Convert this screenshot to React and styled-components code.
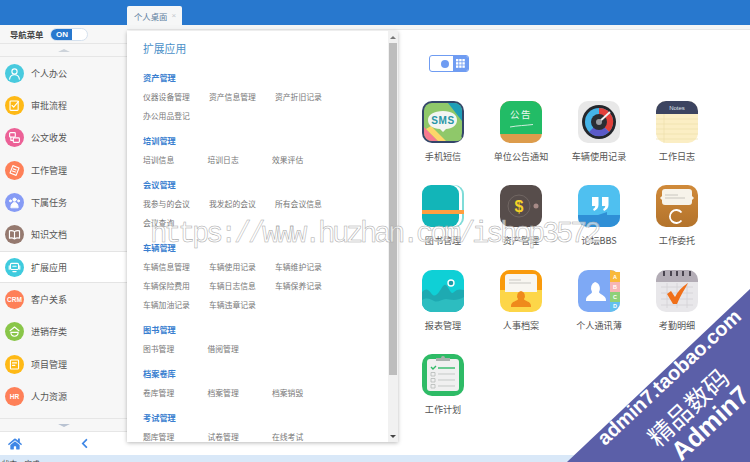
import styled, { createGlobalStyle } from 'styled-components';
import { FaHome, FaChevronLeft } from 'react-icons/fa';

const GlobalStyle = createGlobalStyle`
  html, body { margin: 0; padding: 0; background: #fff; }
  body { font-family: "Noto Sans CJK SC", "Liberation Sans", sans-serif; }
`;

const Shell = styled.div`
  position: relative;
  width: 750px;
  height: 462px;
  overflow: hidden;
  display: flex;
  flex-direction: column;
`;

const TopBar = styled.div`
  height: 25px;
  flex: none;
  background: #2878ce;
  display: flex;
  align-items: flex-end;
  padding-left: 127px;
`;

const Tab = styled.div`
  width: 55px;
  height: 19px;
  background: #f6f7f7;
  border-radius: 2px 2px 0 0;
  display: flex;
  align-items: center;
  padding-left: 7px;
  box-sizing: border-box;
  gap: 4px;
  font-size: 8.4px;
  color: #5f7f9f;
`;

const TabClose = styled.span`
  color: #c4c8cc;
  font-size: 8px;
  font-family: "Liberation Sans", sans-serif;
`;

const Middle = styled.div`
  flex: 1;
  display: flex;
  min-height: 0;
`;

const Sidebar = styled.aside`
  width: 127px;
  flex: none;
  background: #f7f7f7;
  display: flex;
  flex-direction: column;
`;

const NavHead = styled.div`
  height: 19px;
  flex: none;
  display: flex;
  align-items: center;
  padding-left: 10px;
  gap: 6px;
  border-bottom: 1px solid #e6e6e6;
  box-sizing: border-box;
  font-size: 8.4px;
  font-weight: 700;
  color: #444;
`;

const Switch = styled.div`
  width: 38px;
  height: 13px;
  border-radius: 7px;
  border: 1px solid #d5e1ee;
  background: #fff;
  box-sizing: border-box;
  overflow: hidden;
`;

const SwitchOn = styled.div`
  width: 21px;
  height: 100%;
  background: #2878ce;
  color: #fff;
  font: 700 8px/11px "Liberation Sans", sans-serif;
  text-align: center;
  padding-left: 2px;
  box-sizing: border-box;
`;

const ScrollRow = styled.div`
  height: 13px;
  flex: none;
  display: flex;
  align-items: center;
  justify-content: center;
  box-sizing: border-box;
  border-bottom: ${p => (p.$line ? '1px solid #e6e6e6' : 'none')};
  border-top: ${p => (p.$down ? '1px solid #e6e6e6' : 'none')};
`;

const Caret = styled.span`
  width: 0;
  height: 0;
  border-left: 6px solid transparent;
  border-right: 6px solid transparent;
  border-bottom: ${p => (p.$down ? 'none' : '3px solid #cdd3da')};
  border-top: ${p => (p.$down ? '3px solid #b9c3d2' : 'none')};
`;

const NavList = styled.nav`
  height: 361px;
  flex: none;
  display: flex;
  flex-direction: column;
`;

const NavItem = styled.div`
  height: 32.35px;
  flex: none;
  display: flex;
  align-items: center;
  padding-left: 5px;
  gap: 7px;
  box-sizing: border-box;
  font-size: 9px;
  color: #555;
  background: ${p => (p.$active ? '#fff' : 'transparent')};
  border-top: ${p => (p.$active ? '1px solid #e4e4e4' : 'none')};
  border-bottom: ${p => (p.$active ? '1px solid #e4e4e4' : 'none')};
`;

const Badge = styled.span`
  width: 19px;
  height: 19px;
  border-radius: 50%;
  background: ${p => p.$color};
  display: flex;
  align-items: center;
  justify-content: center;
  flex: none;
  color: #fff;
  opacity: 0.95;
  font: 700 6.5px "Liberation Sans", sans-serif;
`;

const NavFoot = styled.div`
  flex: 1;
  display: flex;
  align-items: center;
  border-top: 1px solid #e6e6e6;
  background: #fff;
  color: #3f87e6;
  padding-left: 8px;
  gap: 57px;
  font-size: 14px;
`;

const FootBack = styled.span`
  display: flex;
  font-size: 11px;
`;

const Main = styled.main`
  flex: 1;
  position: relative;
  display: flex;
  flex-direction: column;
  background: #fff;
`;

const Strip = styled.div`
  height: 5px;
  flex: none;
  background: #f4f5f5;
  border-bottom: 1px solid #e8e8e8;
  box-sizing: border-box;
`;

const ViewSwitch = styled.div`
  margin: 25px 0 0 302px;
  width: 40px;
  height: 17px;
  display: flex;
  border: 1px solid #6f9cf2;
  border-radius: 3px;
  box-sizing: border-box;
  overflow: hidden;
`;

const ViewList = styled.div`
  flex: 1;
  display: flex;
  align-items: center;
  justify-content: flex-end;
  padding-right: 4px;
  &::after {
    content: '';
    width: 8px;
    height: 8px;
    border-radius: 50%;
    background: #6f9cf2;
  }
`;

const ViewGrid = styled.div`
  width: 15px;
  background: #6f9cf2;
  display: flex;
  align-items: center;
  justify-content: center;
`;

const AppGrid = styled.div`
  margin: 29px 0 0 277px;
  display: grid;
  grid-template-columns: repeat(4, 78px);
  grid-auto-rows: 84.35px;
`;

const AppCell = styled.div`
  display: flex;
  flex-direction: column;
  align-items: center;
  gap: 7px;
  font-size: 9.1px;
  line-height: 12px;
  color: #555;
  white-space: nowrap;
`;

const Flyout = styled.section`
  position: absolute;
  left: 0;
  top: 6px;
  width: 271px;
  height: 411px;
  background: #fff;
  box-shadow: 0 1px 4px rgba(0, 0, 0, 0.28);
  display: flex;
`;

const FlyoutBody = styled.div`
  flex: 1;
  overflow: hidden;
  padding: 10px 0 0 16px;
`;

const FlyoutTitle = styled.div`
  font-size: 10.8px;
  line-height: 14px;
  color: #4a90c8;
  margin-bottom: 13px;
`;

const Group = styled.div`
  margin-bottom: 6px;
`;

const GroupName = styled.div`
  height: 19px;
  line-height: 19px;
  font-size: 8.2px;
  font-weight: 700;
  color: #3a7fd0;
`;

const LinkRow = styled.div`
  display: grid;
  grid-template-columns: repeat(3, ${p => p.$pitch}px);
  grid-auto-rows: 19px;
  font-size: 7.8px;
  line-height: 19px;
  color: #777;
  white-space: nowrap;
`;

const ScrollBar = styled.div`
  width: 10px;
  flex: none;
  background: #f1f1f1;
  display: flex;
  flex-direction: column;
`;

const ScrollBtn = styled.div`
  height: 12px;
  flex: none;
  display: flex;
  align-items: center;
  justify-content: center;
  &::after {
    content: '';
    border-left: 3px solid transparent;
    border-right: 3px solid transparent;
    border-bottom: ${p => (p.$down ? 'none' : '3px solid #777')};
    border-top: ${p => (p.$down ? '3px solid #444' : 'none')};
  }
`;

const ScrollThumb = styled.div`
  height: 332px;
  margin: 0 1px;
  background: #bdbdbd;
  flex: none;
`;

const ScrollSpace = styled.div`
  flex: 1;
`;

const StatusBar = styled.footer`
  height: 7px;
  flex: none;
  background: #d9e8f8;
  overflow: hidden;
  padding: 4px 0 0 2px;
  box-sizing: border-box;
  font-size: 7.5px;
  line-height: 10px;
  color: #444;
`;

const Watermark = styled.div`
  position: absolute;
  left: 150px;
  top: 218px;
  font: 29px/34px "Liberation Mono", monospace;
  letter-spacing: -3.4px;
  color: rgba(255, 255, 255, 0.6);
  -webkit-text-stroke: 0.5px #a8a8a8;
  white-space: nowrap;
  pointer-events: none;
`;

const Ribbon = styled.div`
  position: absolute;
  right: 0;
  bottom: 0;
  width: 183px;
  height: 173px;
  background: #5b5fa8;
  clip-path: polygon(100% 0, 100% 100%, 0 100%);
`;

const RibbonText = styled.span`
  position: absolute;
  left: ${p => p.$x}px;
  top: ${p => p.$y}px;
  transform: translate(-50%, -50%) rotate(-43deg);
  color: #fff;
  white-space: nowrap;
  font-family: "Liberation Sans", "Noto Sans CJK SC", sans-serif;
  font-size: ${p => p.$size}px;
  font-weight: ${p => p.$weight};
  line-height: 1;
`;

const Stroke = ({ children, w = 1.4 }) => (
  <svg width="13" height="13" viewBox="0 0 16 16" fill="none" stroke="#fff" strokeWidth={w} strokeLinecap="round" strokeLinejoin="round">
    {children}
  </svg>
);

const navItems = [
  { name: '个人办公', color: '#3fc8dd', icon: <Stroke><circle cx="8" cy="5.5" r="3.2" /><path d="M2 15c.4-3.6 2.6-5.4 6-5.4s5.600 1.800 6 5.400" /></Stroke> },
  { name: '审批流程', color: '#ffb60a', icon: <Stroke><rect x="2.500" y="2.500" width="10" height="11.500" rx="1" /><path d="M5 8l2 2 6-7" /></Stroke> },
  { name: '公文收发', color: '#ec5a92', icon: <Stroke><rect x="2" y="2" width="7" height="5.500" rx="1" /><rect x="6.500" y="8.500" width="7.500" height="5.500" rx="1" /><path d="M3.500 7.500v4h3" /></Stroke> },
  { name: '工作管理', color: '#ff7a50', icon: <Stroke><path d="M6 2l7.500 3-3.500 9-7.500-3zM6.500 6l3.500 1.400M5.500 8.500l3.500 1.400" /></Stroke> },
  { name: '下属任务', color: '#8097f5', icon: <Stroke w={1.200}><circle cx="8" cy="4.500" r="2" fill="#fff" /><circle cx="3" cy="6" r="1.200" fill="#fff" /><circle cx="13" cy="6" r="1.200" fill="#fff" /><path d="M3.500 14c0-3.500 1.800-6 4.500-6s4.500 2.500 4.500 6z" fill="#fff" /></Stroke> },
  { name: '知识文档', color: '#907368', icon: <Stroke><path d="M8 4.500C6.500 3.300 4 3 1.800 3.500v9c2.200-.5 4.700-.2 6.200 1 1.500-1.200 4-1.500 6.200-1v-9C12 3 9.500 3.300 8 4.500zM8 4.500v9" /></Stroke> },
  { name: '扩展应用', color: '#35c9dd', active: true, icon: <Stroke><rect x="3" y="3" width="10" height="7.500" rx="1.500" /><path d="M6 13h4M1.500 6v4M14.500 6v4M6 6.500h4" /></Stroke> },
  { name: '客户关系', color: '#ff7a50', label: 'CRM' },
  { name: '进销存类', color: '#84c440', icon: <Stroke><path d="M2.500 7L8 2.500 13.500 7M3.500 9h9c0 3-1.500 4.800-4.500 4.800S3.500 12 3.500 9z" /></Stroke> },
  { name: '项目管理', color: '#ffb60a', icon: <Stroke><rect x="3" y="2.500" width="10" height="11" rx="1" /><path d="M5.500 6h5M5.500 9h3" /></Stroke> },
  { name: '人力资源', color: '#ff7a50', label: 'HR' },
];

const groups = [
  { name: '资产管理', pitch: 66, links: ['仪器设备管理', '资产信息管理', '资产折旧记录', '办公用品登记'] },
  { name: '培训管理', pitch: 64.5, links: ['培训信息', '培训日志', '效果评估'] },
  { name: '会议管理', pitch: 66, links: ['我参与的会议', '我发起的会议', '所有会议信息', '会议查询'] },
  { name: '车辆管理', pitch: 66, links: ['车辆信息管理', '车辆使用记录', '车辆维护记录', '车辆保险费用', '车辆日志信息', '车辆保养记录', '车辆加油记录', '车辆违章记录'] },
  { name: '图书管理', pitch: 64.5, links: ['图书管理', '借阅管理'] },
  { name: '档案卷库', pitch: 64.5, links: ['卷库管理', '档案管理', '档案销毁'] },
  { name: '考试管理', pitch: 64.5, links: ['题库管理', '试卷管理', '在线考试'] },
];

const AppSvg = ({ children }) => (
  <svg width="42" height="42" viewBox="0 0 42 42">{children}</svg>
);

const apps = [
  {
    name: '手机短信',
    art: (
      <AppSvg>
        <rect width="42" height="42" rx="10" fill="#34466a" />
        <rect x="2" y="2" width="38" height="38" rx="8" fill="#8fc86a" />
        <path d="M26 2h6a8 8 0 0 1 8 8v10z" fill="#1f9eb8" />
        <path d="M2 26l14 14h-6a8 8 0 0 1-8-8z" fill="#f77a8f" />
        <path d="M9 25l15 15H16L4 28z" fill="#fdd66a" />
        <path d="M30 28l10 8a5 5 0 0 1-5 4H26z" fill="#8fc86a" />
        <path d="M21 10c9 0 14 3.500 14 9s-5 9-11 9l-3 3-3-3c-7 0-12-3.500-12-9s6-9 15-9z" fill="#f3f5f2" />
        <text x="21" y="23" textAnchor="middle" fontFamily="Liberation Sans" fontWeight="700" fontSize="10" letterSpacing=".6" fill="#2a96a6">SMS</text>
      </AppSvg>
    ),
  },
  {
    name: '单位公告通知',
    art: (
      <AppSvg>
        <rect width="42" height="42" rx="10" fill="#dd9c4c" />
        <path d="M0 10a10 10 0 0 1 10-10h22a10 10 0 0 1 10 10v23H0z" fill="#22bc66" />
        <text x="21" y="17" textAnchor="middle" fontFamily="Noto Sans CJK SC" fontSize="9.500" letterSpacing="1.500" fill="#eaf7ef">公告</text>
        <path d="M10 26c8-1.500 15-1.500 23-2.500" stroke="#cfeedd" strokeWidth="1" fill="none" />
      </AppSvg>
    ),
  },
  {
    name: '车辆使用记录',
    art: (
      <AppSvg>
        <rect width="42" height="42" rx="10" fill="#e8e8e8" />
        <circle cx="21" cy="21" r="17" fill="#24272c" />
        <circle cx="21" cy="21" r="14" fill="#45b4e8" />
        <path d="M21 7a14 14 0 0 1 10 24l-10-10z" fill="#e2403a" />
        <path d="M11 31a14 14 0 0 0 20 0l-10-10z" fill="#5b5ac8" />
        <circle cx="21" cy="21" r="8" fill="#2b2e33" />
        <path d="M20 22L32 11" stroke="#f4f4f4" strokeWidth="1.800" />
        <circle cx="21" cy="21" r="3" fill="#9a9da2" />
      </AppSvg>
    ),
  },
  {
    name: '工作日志',
    art: (
      <AppSvg>
        <rect width="42" height="42" rx="10" fill="#fbeec4" />
        <path d="M0 13v-3A10 10 0 0 1 10 0h22a10 10 0 0 1 10 10v3z" fill="#3c4460" />
        <path d="M0 18h42M0 23h42M0 28h42M0 33h42M0 38h42M8 13v29" stroke="#eedfae" strokeWidth="0.700" />
        <text x="21" y="8.500" textAnchor="middle" fontFamily="Liberation Sans" fontSize="6" fill="#dfe2ea">Notes</text>
      </AppSvg>
    ),
  },
  {
    name: '图书管理',
    art: (
      <AppSvg>
        <rect x="4" width="38" height="42" rx="9" fill="#7fdcd8" />
        <rect x="3" width="37" height="42" rx="9" fill="#fff" />
        <rect width="37" height="42" rx="9" fill="#12b5b8" />
        <rect y="25" width="42" height="4" fill="#ff9f40" />
      </AppSvg>
    ),
  },
  {
    name: '资产管理',
    art: (
      <AppSvg>
        <rect width="42" height="42" rx="10" fill="#574d4b" />
        <circle cx="19" cy="21" r="11" fill="none" stroke="#766c68" strokeWidth="0.800" />
        <text x="19" y="27" textAnchor="middle" fontFamily="Liberation Sans" fontWeight="700" fontSize="16" fill="#f5d327">$</text>
        <circle cx="36" cy="21" r="2.500" fill="#a78b87" />
      </AppSvg>
    ),
  },
  {
    name: '论坛BBS',
    art: (
      <AppSvg>
        <rect width="42" height="42" rx="10" fill="#4fc0f0" />
        <path d="M0 30h20l9-3 0 3h13v2a10 10 0 0 1-10 10H10A10 10 0 0 1 0 32z" fill="#2f8fd6" />
        <path d="M14 12h6.500v8c0 3-2 5-4.500 6l-1-2c1.500-.6 2.200-1.600 2.200-3H14zM24 12h6.500v8c0 3-2 5-4.500 6l-1-2c1.500-.6 2.200-1.600 2.200-3H24z" fill="#fff" />
      </AppSvg>
    ),
  },
  {
    name: '工作委托',
    art: (
      <AppSvg>
        <defs>
          <linearGradient id="brownFill" x1="0" y1="0" x2="0" y2="1">
            <stop offset="0" stopColor="#d08a3a" />
            <stop offset="1" stopColor="#b3732b" />
          </linearGradient>
        </defs>
        <rect width="42" height="42" rx="10" fill="url(#brownFill)" />
        <path d="M6 7a3 3 0 0 1 3-3h24a3 3 0 0 1 3 3v4l2 2-2 2v2a3 3 0 0 1-3 3H9a3 3 0 0 1-3-3v-2l-2-2 2-2z" fill="#f7f3ea" />
        <path d="M9 10h13M9 13h20" stroke="#c9c6bf" strokeWidth="1" />
        <path d="M25.500 27.500a6.500 6.500 0 1 0 0 8" fill="none" stroke="#fff" strokeWidth="1.800" />
      </AppSvg>
    ),
  },
  {
    name: '报表管理',
    art: (
      <AppSvg>
        <rect width="42" height="42" rx="10" fill="#0fd0d6" />
        <path d="M0 22c4-4 6-3 9 1s5 3 8-1 5-10 8-6 4 9 7 6 6-3 10-2v12a10 10 0 0 1-10 10H10A10 10 0 0 1 0 32z" fill="#1eaab2" />
        <path d="M0 30c5-3 8-1 12 1s8-2 12-2 9 3 18-2v5a10 10 0 0 1-10 10H10A10 10 0 0 1 0 32z" fill="#2dbdc0" />
        <circle cx="29" cy="13" r="3" fill="#1a9aa4" stroke="#fff" strokeWidth="1.400" />
      </AppSvg>
    ),
  },
  {
    name: '人事档案',
    art: (
      <AppSvg>
        <rect width="42" height="42" rx="10" fill="#fdd648" />
        <path d="M0 20V10A10 10 0 0 1 10 0h22a10 10 0 0 1 10 10v10h-5l-2 2H7l-2-2z" fill="#f99a0c" />
        <path d="M5 22V7a3 3 0 0 1 3-3h26a3 3 0 0 1 3 3v15z" fill="#f8f6f1" />
        <path d="M9 10h12M9 13h22" stroke="#c9c8c3" strokeWidth="1" />
        <path d="M21 21a4.500 5 0 0 1 3 8c0 2 7 2 7 7v1H11v-1c0-5 7-5 7-7a4.500 5 0 0 1 3-8z" fill="#ef8a1c" />
      </AppSvg>
    ),
  },
  {
    name: '个人通讯薄',
    art: (
      <AppSvg>
        <rect width="42" height="42" rx="10" fill="#7ea9f5" />
        <path d="M32 0a10 10 0 0 1 10 10H32z" fill="#f9b93a" />
        <rect x="32" y="2" width="10" height="10" fill="#f9b93a" />
        <rect x="32" y="12" width="10" height="10" fill="#f7b5b5" />
        <rect x="32" y="22" width="10" height="10" fill="#8fd078" />
        <path d="M32 32h10a10 10 0 0 1-10 10z" fill="#63c0ee" />
        <path d="M17 12a5.500 6.500 0 0 1 4 10c0 2.500 7 3 7 8v1H8v-1c0-5 6-5.500 6-8a5.500 6.500 0 0 1 3-10z" fill="#fff" />
        <g fontFamily="Liberation Sans" fontSize="5.500" fontWeight="700" fill="#fff" textAnchor="middle">
          <text x="37" y="9">A</text>
          <text x="37" y="19">B</text>
          <text x="37" y="29">C</text>
          <text x="37" y="38">D</text>
        </g>
      </AppSvg>
    ),
  },
  {
    name: '考勤明细',
    art: (
      <AppSvg>
        <rect width="42" height="42" rx="10" fill="#e8e7ea" />
        <path d="M0 12v-2A10 10 0 0 1 10 0h22a10 10 0 0 1 10 10v2z" fill="#b3adb6" />
        <path d="M8 1v5M15 1v5M21 1v5M27 1v5M34 1v5" stroke="#3f3b46" strokeWidth="1.800" />
        <path d="M5 17h32M5 23h32M5 29h32M5 35h32M11 13v25M21 13v25M31 13v25" stroke="#d3d2d6" strokeWidth="0.800" />
        <path d="M11 24l4-3 4 6c3-6 7-10 13-14-3 6-8 13-11 21h-4z" fill="#f0701a" />
      </AppSvg>
    ),
  },
  {
    name: '工作计划',
    art: (
      <AppSvg>
        <rect width="42" height="42" rx="10" fill="#2ebb66" />
        <rect x="5" y="5" width="32" height="32" rx="3" fill="#f0f0f0" />
        <path d="M14 7V4h5a2 2 0 0 1 4 0h5v3z" fill="#a8b2ad" />
        <path d="M9 13l2 2 3-3" stroke="#2ebb66" strokeWidth="1.400" fill="none" />
        <path d="M16 14h17" stroke="#2ebb66" strokeWidth="1.400" />
        <path d="M16 20h17M16 26h17M16 32h17" stroke="#c5c9c7" strokeWidth="1" />
        <path d="M9 18.500h4v3.500H9zM9 24.500h4V28H9zM9 30.500h4V34H9z" fill="none" stroke="#b5bab7" strokeWidth="0.800" />
      </AppSvg>
    ),
  },
];

export default function App() {
  return (
    <Shell>
      <GlobalStyle />
      <TopBar>
        <Tab>
          个人桌面
          <TabClose>×</TabClose>
        </Tab>
      </TopBar>
      <Middle>
        <Sidebar>
          <NavHead>
            导航菜单
            <Switch><SwitchOn>ON</SwitchOn></Switch>
          </NavHead>
          <ScrollRow $line><Caret /></ScrollRow>
          <NavList>
            {navItems.map(item => (
              <NavItem key={item.name} $active={item.active}>
                <Badge $color={item.color}>{item.label || item.icon}</Badge>
                {item.name}
              </NavItem>
            ))}
          </NavList>
          <ScrollRow $down><Caret $down /></ScrollRow>
          <NavFoot>
            <FaHome />
            <FootBack><FaChevronLeft /></FootBack>
          </NavFoot>
        </Sidebar>
        <Main>
          <Strip />
          <ViewSwitch>
            <ViewList />
            <ViewGrid>
              <svg width="9" height="9" viewBox="0 0 9 9" fill="#fff">
                {[0, 3.2, 6.4].flatMap(x => [0, 3.2, 6.4].map(y => (
                  <rect key={`${x}-${y}`} x={x} y={y} width="2.400" height="2.400" />
                )))}
              </svg>
            </ViewGrid>
          </ViewSwitch>
          <AppGrid>
            {apps.map(app => (
              <AppCell key={app.name}>
                {app.art}
                {app.name}
              </AppCell>
            ))}
          </AppGrid>
          <Flyout>
            <FlyoutBody>
              <FlyoutTitle>扩展应用</FlyoutTitle>
              {groups.map(group => (
                <Group key={group.name}>
                  <GroupName>{group.name}</GroupName>
                  <LinkRow $pitch={group.pitch}>
                    {group.links.map(link => <span key={link}>{link}</span>)}
                  </LinkRow>
                </Group>
              ))}
            </FlyoutBody>
            <ScrollBar>
              <ScrollBtn />
              <ScrollThumb />
              <ScrollSpace />
              <ScrollBtn $down />
            </ScrollBar>
          </Flyout>
        </Main>
      </Middle>
      <StatusBar>状态：完成</StatusBar>
      <Watermark>https://www.huzhan.com/ishop3572</Watermark>
      <Ribbon>
        <RibbonText $x={102} $y={88} $size={20} $weight={700}>admin7.taobao.com</RibbonText>
        <RibbonText $x={122} $y={119} $size={25} $weight={400}>精品数码</RibbonText>
        <RibbonText $x={143} $y={134} $size={26} $weight={700}>Admin7</RibbonText>
      </Ribbon>
    </Shell>
  );
}
